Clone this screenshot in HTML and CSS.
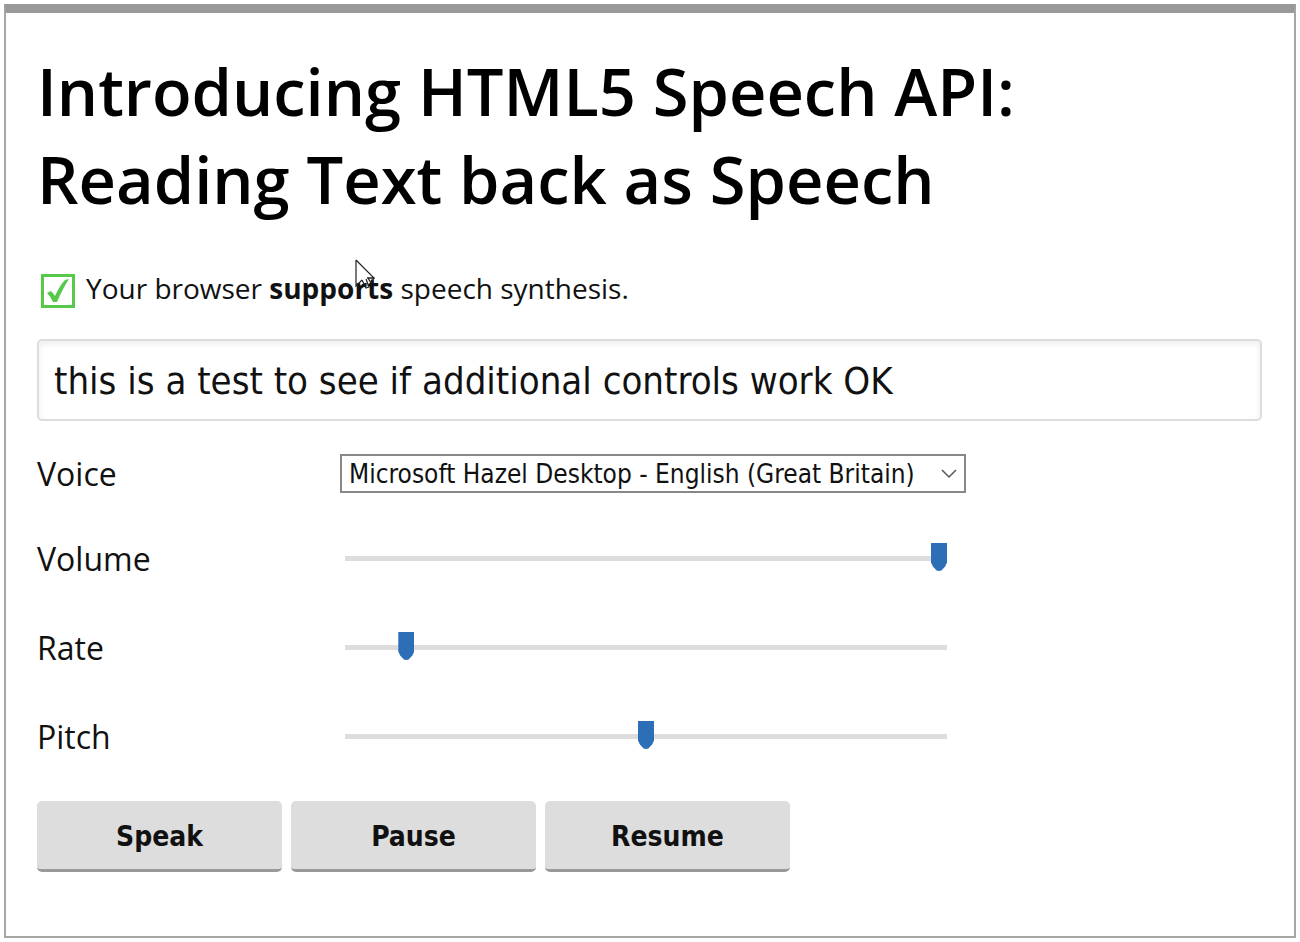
FILE: index.html
```html
<!DOCTYPE html>
<html lang="en">
<head>
  <meta charset="utf-8">
  <title>Introducing HTML5 Speech API</title>
  <meta name="viewport" content="width=device-width, initial-scale=1">
  <link rel="stylesheet" href="styles.css">
</head>
<body>
  <div id="page-wrapper">
    <h1>Introducing HTML5 Speech API:<br>Reading Text back as Speech</h1>

    <p id="msg">
      <svg class="tick" viewBox="0 0 34 34" aria-hidden="true">
        <rect x="1.5" y="1.5" width="31" height="31" fill="none" stroke="#56c94a" stroke-width="3"/>
        <path d="M6 19 L10 17 Q12 19 14 22 Q19 11 24 6 L28 5 Q22 14 16 28 L12 28 Q10 23 6 19Z" fill="#56c94a"/>
      </svg>
      <span class="msg-text">Your browser <strong>supports</strong> speech synthesis.</span>
      <svg class="cursor" viewBox="0 0 20 31" aria-hidden="true">
        <path d="M1 1 V27 L7 21 M1 1 L19 19 H12" fill="none" stroke="#222" stroke-width="1.2"/>
        <path d="M7 21 L11 29 L14 28 L11 20 M13 19 H19 L16 24 Z" fill="none" stroke="#222" stroke-width="1.2"/>
      </svg>
    </p>

    <input type="text" id="speech-msg" name="speech-msg" aria-label="Message" value="this is a test to see if additional controls work OK">

    <div class="option voice">
      <label for="voice">Voice</label>
      <div class="select-wrap">
        <select name="voice" id="voice">
          <option>Microsoft Hazel Desktop - English (Great Britain)</option>
        </select>
        <svg class="arrow" viewBox="0 0 16 10" aria-hidden="true"><path d="M1 1 L8 8 L15 1" fill="none" stroke="#555" stroke-width="1.5"/></svg>
      </div>
    </div>
    <div class="option">
      <label for="volume">Volume</label>
      <input type="range" min="0" max="1" step="0.1" name="volume" id="volume" value="1">
    </div>
    <div class="option">
      <label for="rate">Rate</label>
      <input type="range" min="0.1" max="10" step="0.1" name="rate" id="rate" value="1">
    </div>
    <div class="option">
      <label for="pitch">Pitch</label>
      <input type="range" min="0" max="2" step="0.1" name="pitch" id="pitch" value="1">
    </div>

    <div class="buttons">
      <button id="speak">Speak</button>
      <button id="pause">Pause</button>
      <button id="resume">Resume</button>
    </div>
  </div>
</body>
</html>
```
FILE: styles.css
```css
* { box-sizing: border-box; }

body {
  margin: 4px;
  background: #fff;
  color: #111;
  font-family: "Open Sans", "Noto Sans", sans-serif;
}

#page-wrapper {
  padding: 34px 32px 64px 31px;
  border: 2px solid #a6a6a6;
  border-top: 9px solid #999;
}

h1 {
  margin: 0 0 45px;
  color: #000;
  font-size: 65px;
  font-weight: 600;
  line-height: 88px;
}

#msg {
  position: relative;
  display: flex;
  align-items: flex-end;
  gap: 11px;
  margin: 0 0 31px;
  padding-left: 4px;
  font-size: 28px;
  line-height: 40px;
}
.tick { width: 34px; height: 34px; }

/* mouse pointer lying over the message */
.cursor {
  position: absolute;
  left: 318px;
  top: -9px;
  width: 20px;
  height: 31px;
}

input[type="text"] {
  display: block;
  width: 100%;
  height: 82px;
  padding: 2px 15px 0;
  border: 2px solid #ddd;
  border-radius: 5px;
  box-shadow: inset 0 3px 6px #eee;
  color: #111;
  font-family: "DejaVu Sans Condensed", "Noto Sans", sans-serif;
  font-size: 38px;
}

.option {
  display: flex;
  align-items: center;
  height: 89px;
}
.option.voice {
  height: 40px;
  margin: 32px 0 21px;
}
label {
  flex: 0 0 303px;
  font-size: 32px;
}

.select-wrap {
  position: relative;
  width: 626px;
}
select {
  display: block;
  width: 100%;
  height: 39px;
  padding: 2px 36px 0 7px;
  border: 2px solid #888;
  border-radius: 0;
  background: #fff;
  color: #111;
  font-family: "DejaVu Sans Condensed", "Noto Sans", sans-serif;
  font-size: 26px;
  appearance: none;
}
.arrow {
  position: absolute;
  right: 9px;
  top: 15px;
  width: 16px;
  height: 10px;
  pointer-events: none;
}

input[type="range"] {
  width: 602px;
  height: 28px;
  margin: 0 0 0 5px;
  background: transparent;
  appearance: none;
}
input[type="range"]::-webkit-slider-runnable-track {
  height: 5px;
  background: #ddd;
}
input[type="range"]::-webkit-slider-thumb {
  width: 16px;
  height: 28px;
  margin-top: -13px;
  background: #2d6fb6;
  clip-path: polygon(0 0, 100% 0, 100% 70%, 88% 84%, 65% 98%, 50% 100%, 35% 98%, 12% 84%, 0 70%);
  appearance: none;
}

.buttons {
  display: flex;
  gap: 9px;
  margin-top: 20px;
}
button {
  width: 245px;
  height: 71px;
  padding-top: 4px;
  border: none;
  border-bottom: 3px solid #999;
  border-radius: 5px;
  background: #ddd;
  color: #111;
  font-family: "DejaVu Sans Condensed", "Noto Sans", sans-serif;
  font-size: 28px;
  font-weight: bold;
  cursor: pointer;
}
```
